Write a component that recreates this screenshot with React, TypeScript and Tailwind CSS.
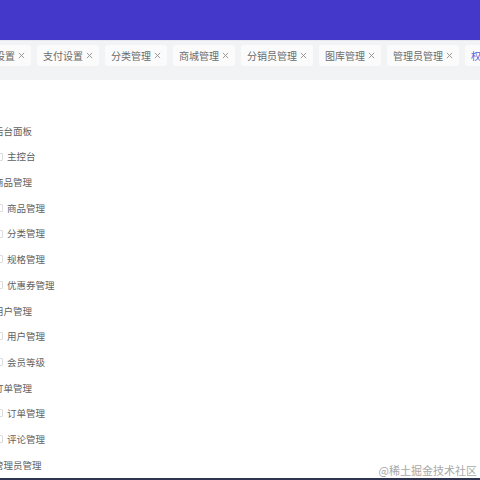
import React from 'react';

const tabs = ['系统设置', '支付设置', '分类管理', '商城管理', '分销员管理', '图库管理', '管理员管理', '权限管理'];

const menu: { title: string; items: string[] }[] = [
  { title: '后台面板', items: ['主控台'] },
  { title: '商品管理', items: ['商品管理', '分类管理', '规格管理', '优惠券管理'] },
  { title: '用户管理', items: ['用户管理', '会员等级'] },
  { title: '订单管理', items: ['订单管理', '评论管理'] },
  { title: '管理员管理', items: [] },
];

function Close() {
  return (
    <svg width="7" height="7" viewBox="0 0 8 8" className="shrink-0">
      <path d="M1 1L7 7M7 1L1 7" stroke="#8c8c8c" strokeWidth="1" />
    </svg>
  );
}

export default function App() {
  return (
    <div
      className="relative w-[480px] h-[480px] overflow-hidden bg-white"
      style={{ fontFamily: '"Noto Sans CJK SC", "Noto Sans", sans-serif' }}
    >
      {/* header */}
      <div className="h-[40px] bg-[#4338c9]" />

      {/* tab bar */}
      <div className="h-[40px] bg-[#f2f3f5] border-t border-[#e8e8f0] flex items-center overflow-hidden">
        <div className="flex gap-[6px] ml-[-31px] shrink-0 mt-[-10px]">
          {tabs.map((t, i) => {
            const active = i === tabs.length - 1;
            return (
              <div
                key={t}
                className="h-[21px] flex items-center gap-[3px] px-[6px] rounded-[3px] bg-[#fbfbfc] shrink-0"
              >
                <span
                  className={`text-[10px] leading-none whitespace-nowrap ${active ? 'text-[#5b5fd9]' : 'text-[#6b6b6b]'}`}
                >
                  {t}
                </span>
                <Close />
              </div>
            );
          })}
        </div>
      </div>

      {/* sidebar menu */}
      <div className="pt-[38px] ml-[-6px] flex flex-col">
        {menu.map(g => (
          <React.Fragment key={g.title}>
            <div className="h-[25.7px] flex items-center text-[9.5px] text-[#5f5f5f]">{g.title}</div>
            {g.items.map(it => (
              <div key={g.title + it} className="h-[25.7px] flex items-center gap-[4px] text-[9.5px] text-[#5f5f5f]">
                <span className="w-[9px] h-[8px] rounded-[1px] border border-[#dcdcdc]" />
                <span>{it}</span>
              </div>
            ))}
          </React.Fragment>
        ))}
      </div>

      {/* watermark */}
      <div className="absolute right-[3px] bottom-[4px] text-[11px] text-[#a8a8a8] leading-none">
        @稀土掘金技术社区
      </div>
      <div className="absolute left-0 right-0 bottom-0 h-[2px] bg-[#2f3450]" />
    </div>
  );
}
